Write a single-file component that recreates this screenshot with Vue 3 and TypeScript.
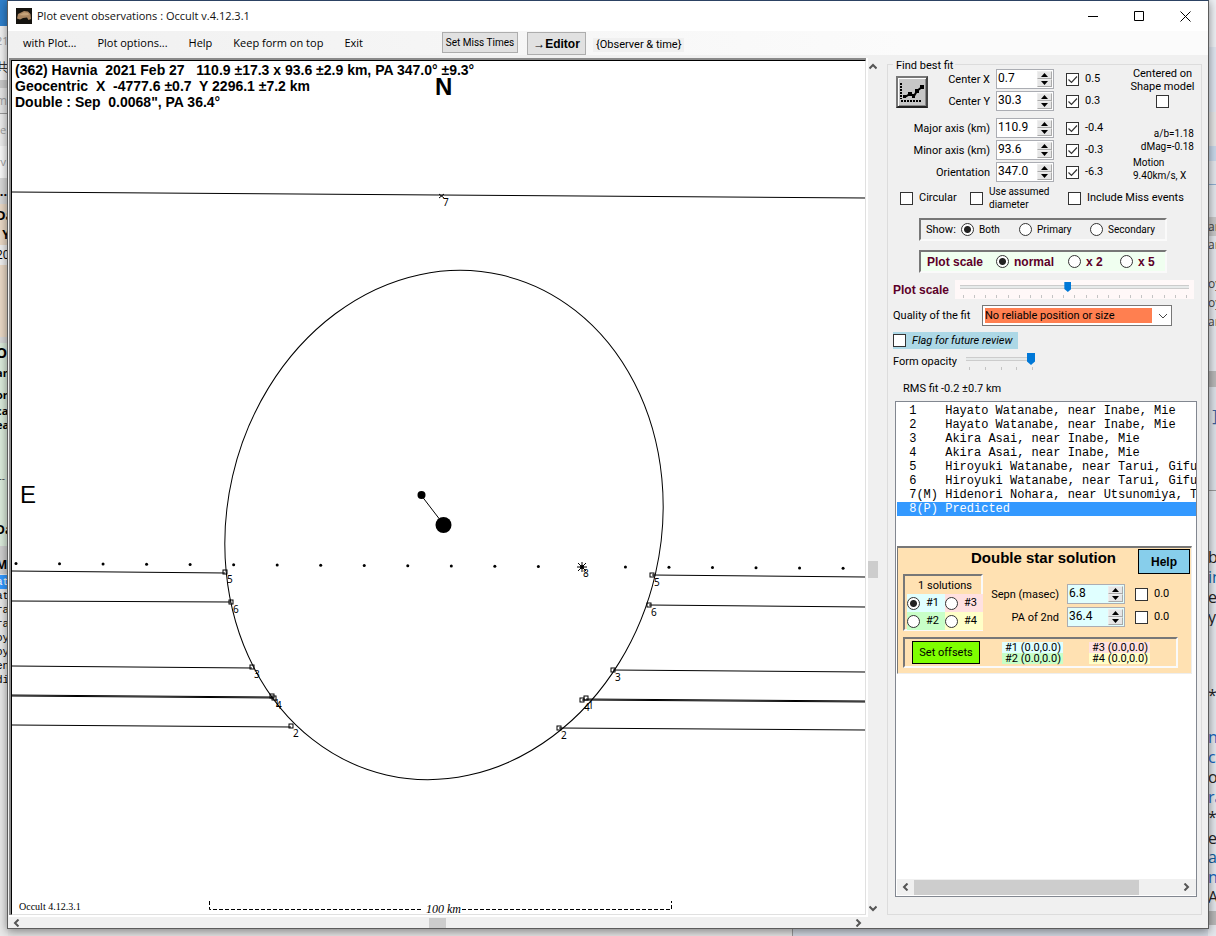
<script setup lang="ts">
import { reactive, ref } from 'vue'

interface Fragment { top: number; height: number; bg?: string; text?: string; color?: string; bold?: boolean; size?: number; mono?: boolean }
interface FitRow { id: string; label: string; value: string; on: boolean; delta: string }
interface Chord { x1: number; y1: number; x2: number; y2: number }
interface Marker { id: string; x: number; y: number }

const leftFragments: Fragment[] = [
  { top: 0, height: 26, bg: '#2f80cc' },
  { top: 26, height: 54, bg: '#f2f2f2' },
  { top: 33, height: 16, text: '21', color: '#a0a0a0', size: 11 },
  { top: 60, height: 16, text: '共', color: '#333', size: 12 },
  { top: 80, height: 8, bg: '#c9c9c9' },
  { top: 88, height: 25, bg: '#e6e6e6', text: 'm', color: '#a0a0a0', size: 12 },
  { top: 113, height: 1, bg: '#999' },
  { top: 114, height: 32, bg: '#ededed', text: 'te', color: '#a0a0a0', size: 11 },
  { top: 146, height: 32, bg: '#fafafa', text: 'rv', color: '#a0a0a0', size: 11 },
  { top: 178, height: 26, bg: '#d9d9d9', text: '...', color: '#000', bold: true, size: 13 },
  { top: 204, height: 133, bg: '#ead9c6' },
  { top: 206, height: 18, text: 'Da', color: '#000', bold: true, size: 13 },
  { top: 226, height: 18, text: '  Y', color: '#000', bold: true, size: 12 },
  { top: 245, height: 20, bg: '#f0f0f0', text: '20', color: '#000', size: 12 },
  { top: 337, height: 6, bg: '#d9d9d9' },
  { top: 343, height: 203, bg: '#dcecdc' },
  { top: 344, height: 18, text: 'Ob', color: '#000', bold: true, size: 14 },
  { top: 365, height: 16, text: 'an', color: '#000', bold: true, size: 11 },
  { top: 387, height: 16, text: 'or', color: '#000', bold: true, size: 11 },
  { top: 404, height: 13, text: 'ca', color: '#000', bold: true, size: 11 },
  { top: 417, height: 16, text: 'ea', color: '#000', bold: true, size: 11 },
  { top: 470, height: 16, text: ' --', color: '#444', size: 10 },
  { top: 522, height: 16, text: 'Da', color: '#000', bold: true, size: 12 },
  { top: 546, height: 28, bg: '#d0d0d0' },
  { top: 557, height: 16, text: 'Ma', color: '#000', bold: true, size: 12 },
  { top: 574, height: 354, bg: '#e9e9e9' },
  { top: 575, height: 14, bg: '#3399ff', text: 'at', color: '#fff', size: 11, mono: true },
  ...['at', 'ra', 'ra', 'oy', 'oy', 'en', 'di'].map((text, i) => ({ top: 589 + i * 14, height: 14, text, color: '#000', size: 11, mono: true })),
]

const rightFragments: Fragment[] = [
  { top: 0, height: 47, bg: '#eef0f4' },
  { top: 47, height: 65, bg: '#dfe6f0' },
  { top: 112, height: 34, bg: '#e6e6e6' },
  { top: 146, height: 15, bg: '#c8d8ea' },
  { top: 184, height: 1, bg: '#8faed0' },
  { top: 217, height: 19, bg: '#c8c8c8', text: 'an', color: '#444', size: 12 },
  { top: 236, height: 18, text: 'an', color: '#444', size: 12 },
  { top: 275, height: 18, text: 'oy', color: '#444', size: 12 },
  { top: 294, height: 18, text: 'oy', color: '#444', size: 12 },
  { top: 313, height: 18, text: 'an', color: '#444', size: 12 },
  { top: 371, height: 16, bg: '#b8b8b8' },
  { top: 387, height: 103, bg: '#dce1e8' },
  { top: 407, height: 18, text: ' ]', color: '#3a5f9a', size: 16 },
  { top: 490, height: 1, bg: '#999' },
  { top: 548, height: 18, text: 'b', color: '#222', size: 16 },
  { top: 568, height: 18, text: 'in', color: '#0f5c9a', size: 16 },
  { top: 588, height: 18, text: 'e', color: '#222', size: 16 },
  { top: 608, height: 18, text: 'y', color: '#222', size: 16 },
  { top: 686, height: 18, text: '*', color: '#222', size: 16 },
  { top: 728, height: 18, text: 'ne', color: '#1565c0', size: 16 },
  { top: 748, height: 18, text: 'co', color: '#1565c0', size: 16 },
  { top: 768, height: 18, text: 'on', color: '#222', size: 16 },
  { top: 788, height: 18, text: 'ra', color: '#1565c0', size: 16 },
  { top: 808, height: 18, text: '*', color: '#222', size: 16 },
  { top: 829, height: 18, text: 'e-', color: '#222', size: 16 },
  { top: 848, height: 18, text: 'an', color: '#0f5c9a', size: 16 },
  { top: 868, height: 18, text: 'n', color: '#1565c0', size: 16 },
  { top: 888, height: 18, text: 'A', color: '#222', size: 16 },
  { top: 911, height: 14, bg: '#b8b8b8' },
]

const fragmentStyle = (f: Fragment) => ({
  top: f.top + 'px', height: f.height + 'px', lineHeight: f.height + 'px',
  background: f.bg ?? 'transparent', color: f.color, fontSize: (f.size ?? 12) + 'px',
  fontWeight: f.bold ? 700 : 400, fontFamily: f.mono ? '"Liberation Mono", monospace' : undefined,
})

const menu = ['with Plot...', 'Plot options...', 'Help', 'Keep form on top', 'Exit']

const heading = [
  '(362) Havnia  2021 Feb 27   110.9 ±17.3 x 93.6 ±2.9 km, PA 347.0° ±9.3°',
  'Geocentric  X  -4777.6 ±0.7  Y 2296.1 ±7.2 km',
  'Double : Sep  0.0068", PA 36.4°',
]

const fitGroups = reactive<FitRow[][]>([
  [
    { id: 'cx', label: 'Center X', value: '0.7', on: true, delta: '0.5' },
    { id: 'cy', label: 'Center Y', value: '30.3', on: true, delta: '0.3' },
  ],
  [
    { id: 'major', label: 'Major axis (km)', value: '110.9', on: true, delta: '-0.4' },
    { id: 'minor', label: 'Minor axis (km)', value: '93.6', on: true, delta: '-0.3' },
    { id: 'orient', label: 'Orientation', value: '347.0', on: true, delta: '-6.3' },
  ],
])
const doubleRows = reactive<FitRow[]>([
  { id: 'sepn', label: 'Sepn (masec)', value: '6.8', on: false, delta: '0.0' },
  { id: 'pa', label: 'PA of 2nd', value: '36.4', on: false, delta: '0.0' },
])
const step = (row: FitRow, by: number) => { row.value = (parseFloat(row.value) + by).toFixed(1) }

const centered = ref(false)
const circular = ref(false)
const assumed = ref(false)
const misses = ref(false)
const flagged = ref(false)
const show = ref('Both')
const scale = ref('normal')
const solution = ref('#1')
const zoom = ref(47)
const opacity = ref(100)
const selected = ref(7)

const observers = [
  ' 1    Hayato Watanabe, near Inabe, Mie',
  ' 2    Hayato Watanabe, near Inabe, Mie',
  ' 3    Akira Asai, near Inabe, Mie',
  ' 4    Akira Asai, near Inabe, Mie',
  ' 5    Hiroyuki Watanabe, near Tarui, Gifu',
  ' 6    Hiroyuki Watanabe, near Tarui, Gifu',
  ' 7(M) Hidenori Nohara, near Utsunomiya, Tochigi',
  ' 8(P) Predicted',
]
const solutions = ['#1', '#3', '#2', '#4']

const chords: Chord[] = [
  { x1: 12, y1: 192, x2: 865, y2: 198 },
  { x1: 12, y1: 571, x2: 225, y2: 573 }, { x1: 652, y1: 575, x2: 865, y2: 577 },
  { x1: 12, y1: 601, x2: 231, y2: 602 }, { x1: 649, y1: 605, x2: 865, y2: 607 },
  { x1: 12, y1: 666, x2: 252, y2: 668 }, { x1: 613, y1: 670, x2: 865, y2: 672 },
  { x1: 12, y1: 695, x2: 272, y2: 697 }, { x1: 586, y1: 699, x2: 865, y2: 701 },
  { x1: 12, y1: 696, x2: 274, y2: 698 }, { x1: 582, y1: 700, x2: 865, y2: 702 },
  { x1: 12, y1: 725, x2: 291, y2: 727 }, { x1: 559, y1: 728, x2: 865, y2: 730 },
]
const markers: Marker[] = [
  { id: '5', x: 225, y: 572 }, { id: '6', x: 231, y: 602 }, { id: '3', x: 252, y: 667 },
  { id: '1', x: 272, y: 696 }, { id: '4', x: 274, y: 698 }, { id: '2', x: 291, y: 726 },
  { id: '5', x: 652, y: 575 }, { id: '6', x: 649, y: 605 }, { id: '3', x: 613, y: 670 },
  { id: '1', x: 586, y: 698 }, { id: '4', x: 582, y: 700 }, { id: '2', x: 559, y: 728 },
]
const path = Array.from({ length: 20 }, (_, i) => ({ x: 16 + i * 43.53, y: 563.5 + i * 0.25 })).filter((_, i) => i !== 13)
</script>

<template>
  <div class="desktop">
    <div class="behind left" aria-hidden="true">
      <span v-for="(f, i) in leftFragments" :key="i" :style="fragmentStyle(f)">{{ f.text }}</span>
    </div>
    <div class="behind right" aria-hidden="true">
      <span v-for="(f, i) in rightFragments" :key="i" :style="fragmentStyle(f)">{{ f.text }}</span>
    </div>

    <div class="window">
      <header class="titlebar">
        <svg class="app-icon" width="16" height="16" viewBox="0 0 16 16"><rect width="16" height="16" fill="#15130f" /><path d="M1 10.500L2 6L5 4.500L8 3L12 3.500L14.500 6L15 11L12.500 12L11 9.500L7 10L4 11.500Z" fill="#a98560" /><path d="M3 7L8 4.500L12 5L13 7L8 7.500Z" fill="#c5a279" /></svg>
        <h1>Plot event observations : Occult v.4.12.3.1</h1>
        <div class="caption">
          <button aria-label="Minimize"><svg width="11" height="11" viewBox="0 0 11 11"><path d="M0 5.500H10" /></svg></button>
          <button aria-label="Maximize"><svg width="11" height="11" viewBox="0 0 11 11"><path d="M.5 .5H9.500V9.500H.5Z" /></svg></button>
          <button aria-label="Close"><svg width="11" height="11" viewBox="0 0 11 11"><path d="M.5 .5L10.500 10.500M10.500 .5L.5 10.500" /></svg></button>
        </div>
      </header>

      <div class="menubar">
        <nav><button v-for="m in menu" :key="m">{{ m }}</button></nav>
        <button class="push miss">Set Miss Times</button>
        <button class="push editor">→Editor</button>
        <span class="mode">{Observer &amp; time}</span>
      </div>

      <main class="body">
        <section class="plot-col">
          <div class="plot">
            <svg viewBox="12 61 853 853" role="img" aria-label="Event plot">
              <g class="heading">
                <text v-for="(h, i) in heading" :key="i" x="15" :y="75 + i * 16">{{ h }}</text>
              </g>
              <text class="north" x="435" y="95">N</text>
              <text class="east" x="20" y="503">E</text>
              <g class="line">
                <line v-for="(c, i) in chords" :key="i" v-bind="c" />
                <ellipse cx="444" cy="525" rx="217" ry="256.500" transform="rotate(13 444 525)" />
                <rect v-for="(m, i) in markers" :key="i" :x="m.x - 2" :y="m.y - 2" width="4" height="4" />
                <path d="M439 194L444 198M444 194L439 198M577 567H587M582 562V572M578 563L586 571M586 563L578 571M421 495L444 525" />
              </g>
              <circle v-for="(p, i) in path" :key="i" :cx="p.x" :cy="p.y" r="1.500" />
              <circle cx="421.500" cy="495" r="4" /><circle cx="443.500" cy="525" r="8" /><circle cx="582" cy="567" r="2" />
              <g class="tag">
                <text v-for="(m, i) in markers" :key="i" :x="m.x + 2" :y="m.y + 11">{{ m.id }}</text>
                <text x="443" y="206">7</text><text x="583" y="577">8</text>
              </g>
              <path class="rule" d="M209.500 901V909.500H422M462 909.500H671.500V901" />
              <text class="km" x="426" y="913">100 km</text>
              <text class="version" x="19" y="910">Occult 4.12.3.1</text>
            </svg>
          </div>
          <div class="hbar" aria-hidden="true">
            <svg width="7" height="8" viewBox="0 0 7 8"><path d="M5.500 .5L2 4L5.500 7.500" /></svg>
            <i></i>
            <svg width="7" height="8" viewBox="0 0 7 8"><path d="M1.500 .5L5 4L1.500 7.500" /></svg>
          </div>
        </section>

        <div class="vbar" aria-hidden="true">
          <svg width="8" height="7" viewBox="0 0 8 7"><path d="M.5 5.500L4 2L7.500 5.500" /></svg>
          <span class="above"></span>
          <i></i>
          <span class="below"></span>
          <svg width="8" height="7" viewBox="0 0 8 7"><path d="M.5 1.500L4 5L7.500 1.500" /></svg>
        </div>

        <fieldset class="fit">
          <legend>Find best fit</legend>

          <div class="fit-top">
            <div class="fit-params">
              <button class="chart" aria-label="Fit">
                <svg width="26" height="26" viewBox="0 0 26 26"><path class="axis" d="M2 4V20" /><path class="axis" d="M2 22H22" /><path class="trend" d="M6 18L11 15L15 17L18 12L23 8" /><path d="M4 16H7V19H4ZM9 13H13V17H9ZM13 15H16V19H13ZM16 10H20V14H16ZM21 6H25V10H21Z" /></svg>
              </button>
              <div v-for="(g, gi) in fitGroups" :key="gi" class="fit-group">
                <div v-for="r in g" :key="r.id" class="fit-row">
                  <label :for="r.id">{{ r.label }}</label>
                  <span class="spin">
                    <input :id="r.id" v-model="r.value" type="text">
                    <span><button aria-label="Up" @click="step(r, 0.1)"><svg width="7" height="4" viewBox="0 0 7 4"><path d="M0 4L3.500 0L7 4Z" /></svg></button><button aria-label="Down" @click="step(r, -0.1)"><svg width="7" height="4" viewBox="0 0 7 4"><path d="M0 0L3.500 4L7 0Z" /></svg></button></span>
                  </span>
                  <label class="tick"><input v-model="r.on" type="checkbox">{{ r.delta }}</label>
                </div>
              </div>
            </div>
            <div class="fit-side">
              <label class="centered">Centered on<br>Shape model<input v-model="centered" type="checkbox"></label>
              <p class="ratio">a/b=1.18<br>dMag=-0.18</p>
              <p class="motion">Motion<br>9.40km/s, X</p>
            </div>
          </div>

          <div class="options">
            <label class="tick"><input v-model="circular" type="checkbox">Circular</label>
            <label class="tick small"><input v-model="assumed" type="checkbox"><span>Use assumed<br>diameter</span></label>
            <label class="tick"><input v-model="misses" type="checkbox">Include Miss events</label>
          </div>

          <div class="sunken show">
            <span>Show:</span>
            <label v-for="s in ['Both', 'Primary', 'Secondary']" :key="s"><input v-model="show" type="radio" name="show" :value="s">{{ s }}</label>
          </div>
          <div class="sunken scale">
            <span>Plot scale</span>
            <label v-for="s in ['normal', 'x 2', 'x 5']" :key="s"><input v-model="scale" type="radio" name="scale" :value="s">{{ s }}</label>
          </div>

          <div class="slide-row">
            <label class="maroon" for="zoom">Plot scale</label>
            <div class="slider wide"><input id="zoom" v-model="zoom" type="range"><div class="ticks"><i v-for="n in 21" :key="n"></i></div></div>
          </div>

          <div class="quality">
            <label for="quality">Quality of the fit</label>
            <div class="combo">
              <select id="quality"><option>No reliable position or size</option></select>
              <svg width="10" height="6" viewBox="0 0 10 6"><path d="M1 1L5 5L9 1" /></svg>
            </div>
          </div>

          <label class="tick flag"><input v-model="flagged" type="checkbox">Flag for future review</label>

          <div class="slide-row opacity">
            <label for="opacity">Form opacity</label>
            <div class="slider"><input id="opacity" v-model="opacity" type="range"><div class="ticks"><i v-for="n in 5" :key="n"></i></div></div>
          </div>

          <p class="rms">RMS fit -0.2 ±0.7 km</p>

          <div class="listbox">
            <ul>
              <li v-for="(o, i) in observers" :key="i" :class="{ on: selected === i }" @click="selected = i">{{ o }}</li>
            </ul>
            <section class="double">
              <h2>Double star solution</h2>
              <button class="help">Help</button>
              <div class="double-mid">
                <div class="sunken solutions">
                  <p>1 solutions</p>
                  <label v-for="(s, i) in solutions" :key="s" :class="'c' + i"><input v-model="solution" type="radio" name="solution" :value="s">{{ s }}</label>
                </div>
                <div class="double-rows">
                  <div v-for="r in doubleRows" :key="r.id" class="fit-row">
                    <label :for="r.id">{{ r.label }}</label>
                    <span class="spin cyan">
                      <input :id="r.id" v-model="r.value" type="text">
                      <span><button aria-label="Up" @click="step(r, 0.1)"><svg width="7" height="4" viewBox="0 0 7 4"><path d="M0 4L3.500 0L7 4Z" /></svg></button><button aria-label="Down" @click="step(r, -0.1)"><svg width="7" height="4" viewBox="0 0 7 4"><path d="M0 0L3.500 4L7 0Z" /></svg></button></span>
                    </span>
                    <label class="tick"><input v-model="r.on" type="checkbox">{{ r.delta }}</label>
                  </div>
                </div>
              </div>
              <div class="sunken offsets">
                <button>Set offsets</button>
                <p><span class="c0">#1 (0.0,0.0)</span><span class="c2">#2 (0.0,0.0)</span></p>
                <p><span class="c1">#3 (0.0,0.0)</span><span class="c3">#4 (0.0,0.0)</span></p>
              </div>
            </section>
            <div class="list-scroll" aria-hidden="true">
              <svg width="7" height="8" viewBox="0 0 7 8"><path d="M5.500 .5L2 4L5.500 7.500" /></svg>
              <i></i>
              <svg width="7" height="8" viewBox="0 0 7 8"><path d="M1.500 .5L5 4L1.500 7.500" /></svg>
            </div>
          </div>
        </fieldset>
      </main>
    </div>
  </div>
</template>

<style>
html, body { margin: 0; background: #e4e4e4; }
</style>

<style scoped>
* { box-sizing: border-box; }
p, h1, h2, ul { margin: 0; padding: 0; font-weight: 400; }
button, input, select { font: inherit; color: inherit; margin: 0; padding: 0; border: 0; background: none; border-radius: 0; }
.desktop { position: relative; display: flex; height: 100vh; min-height: 900px; padding: 0 7px 7px; overflow: hidden; background: linear-gradient(90deg, #e4e4e4 792px, #999 792px, #999 793px, #d3d9e2 793px); font: 11px/14px Roboto, "Liberation Sans", "Noto Sans CJK JP", sans-serif; color: #000; }
.behind { position: absolute; top: 0; bottom: 0; width: 8px; overflow: hidden; font-family: "Open Sans", "Noto Sans CJK JP", sans-serif; background: #e9e9e9; }
.behind.left { left: 0; }
.behind.right { right: 0; background: #e4e7ec; }
.behind span { position: absolute; left: 0; width: 8px; overflow: hidden; white-space: pre; }
.behind.left span { text-indent: -4px; }
.window { position: relative; flex: 1; min-width: 0; display: flex; flex-direction: column; background: #f0f0f0; border: 1px solid #5c5c5c; border-top-color: #2c4263; box-shadow: 0 2px 9px rgba(0, 0, 0, .45); }

.titlebar { display: flex; align-items: center; height: 30px; padding-left: 8px; background: #fff; }
.app-icon { margin-right: 5px; }
.titlebar h1 { flex: 1; font: 11px/16px "Open Sans", sans-serif; color: #111; }
.caption { display: flex; }
.caption button { width: 46px; height: 28px; display: flex; align-items: center; justify-content: center; }
.caption svg { fill: none; stroke: #000; stroke-width: 1; }

.menubar { display: flex; align-items: flex-start; height: 24px; background: linear-gradient(90deg, #f0f0f0, #fbfbfb 75%); padding-top: 1px; }
.menubar nav { display: flex; gap: 21px; width: 434px; padding-left: 15px; }
.menubar nav button { font: 11px/22px "Open Sans", sans-serif; white-space: nowrap; }
.push { border: 1px solid #adadad; background: #e1e1e1; white-space: nowrap; }
.miss { width: 76px; height: 21px; font-size: 10px; }
.editor { width: 59px; height: 23px; margin-left: 9px; font: bold 12px "Liberation Sans", sans-serif; }
.mode { margin: 6px 0 0 7px; padding: 0 3px; background: #f0f0f0; }

.body { flex: 1; min-height: 0; display: flex; padding: 3px 6px 0 1px; }
.plot-col { flex: 1; min-width: 0; display: flex; flex-direction: column; padding-right: 2px; background: #fff; }
.plot { flex: 1; min-height: 0; border: 2px solid #8a8a8a; border-width: 2px 0 0 2px; background: #fff; }
.plot svg { display: block; width: 100%; height: 100%; border: 1px solid #000; border-right-color: #e0e0e0; border-bottom-color: #e0e0e0; }
.heading { font: bold 14px "Liberation Sans", sans-serif; }
.heading text { white-space: pre; }
.north { font: bold 24px "Liberation Sans", sans-serif; }
.east { font: 24px "Liberation Sans", sans-serif; }
.tag { font: 10px "Noto Sans", sans-serif; }
.line { fill: none; stroke: #000; stroke-width: 1; }
.rule { fill: none; stroke: #000; stroke-dasharray: 4 2; }
.km { font: italic 12px "Liberation Serif", serif; }
.version { font: 10px "Liberation Serif", serif; }

.hbar, .list-scroll { display: flex; align-items: center; background: #f0f0f0; }
.hbar { height: 11px; margin: 2px -2px 0 0; padding: 0 6px 0 4px; justify-content: space-between; }
.hbar i { width: 17px; height: 10px; background: #cdcdcd; }
.hbar svg, .vbar svg, .list-scroll svg { fill: none; stroke: #555; stroke-width: 2; }
.vbar { width: 12px; display: flex; flex-direction: column; padding: 5px 2px 16px 0; }
.vbar svg { margin-left: 1px; flex: none; }
.vbar .above { flex: 3; }
.vbar .below { flex: 2; }
.vbar i { flex: none; height: 17px; background: #cdcdcd; }

.fit { width: 315px; min-width: 0; margin: 1px 0 13px 7px; padding: 0 4px 17px 5px; border: 1px solid #dcdcdc; display: flex; flex-direction: column; }
.fit legend { height: 10px; padding: 0 2px 0 3px; line-height: 14px; white-space: nowrap; }
.fit-top { display: flex; gap: 16px; }
.fit-params { position: relative; display: flex; flex-direction: column; gap: 7px; }
.fit-group { display: flex; flex-direction: column; gap: 2px; }
.chart { position: absolute; left: 3px; top: 7px; width: 32px; height: 32px; display: flex; align-items: center; justify-content: center; background: #c6c6c6; border: 2px solid; border-color: #777 #444 #222 #777; box-shadow: inset 1px 1px #fff, inset -1px -1px #888; }
.chart .axis { fill: none; stroke: #000; stroke-width: 2; stroke-dasharray: 2 1; }
.chart .trend { fill: none; stroke: #000; stroke-width: 2; }
.fit-row { display: grid; grid-template-columns: 97px 58px 54px; align-items: center; height: 20px; }
.fit-params .fit-row { column-gap: 6px; }
.fit-row > label:first-child { text-align: right; white-space: nowrap; padding-top: 2px; }
.spin { display: flex; height: 20px; border: 1px solid #abadb3; background: #fff; padding: 1px; }
.spin.cyan { background: #e0ffff; }
.spin input { flex: 1; width: 20px; min-width: 0; outline: 0; font-size: 12px; line-height: 14px; padding-bottom: 2px; }
.spin > span { width: 15px; display: flex; flex-direction: column; background: #e6e6e6; }
.spin button { flex: 1; display: flex; align-items: center; justify-content: center; border: 1px solid #aaa; border-top-color: #eee; border-left-color: #eee; }
.tick { display: flex; align-items: center; gap: 6px; white-space: nowrap; }
.fit-params .tick { padding-left: 6px; }
input[type=checkbox] { appearance: none; flex: none; width: 13px; height: 13px; border: 1px solid #333; background: #fff; }
input[type=checkbox]:checked { background: #fff url("data:image/svg+xml,%3Csvg xmlns='http://www.w3.org/2000/svg' viewBox='0 0 11 11'%3E%3Cpath d='M1.500 5.500L4.500 8.500L10 2.500' fill='none' stroke='%23333' stroke-width='1.200'/%3E%3C/svg%3E"); }
input[type=radio] { appearance: none; flex: none; width: 13px; height: 13px; border: 1px solid #333; border-radius: 50%; background: #fff; }
input[type=radio]:checked { background: radial-gradient(circle, #222 3px, #fff 4px); }
.fit-side { flex: 1; font-size: 10px; line-height: 13px; }
.centered { display: block; margin: -2px 2px 19px 0; text-align: center; font-size: 11px; white-space: nowrap; }
.centered input { display: block; margin: 2px auto 0; }
.ratio { text-align: right; padding-right: 3px; margin-bottom: 3px; }
.motion { padding-left: 3px; white-space: nowrap; }

.options { display: flex; align-items: center; height: 26px; margin-top: 3px; padding-left: 7px; }
.options .tick:nth-child(1) { width: 70px; }
.options .tick:nth-child(2) { width: 98px; }
.small { font-size: 10px; line-height: 13px; }
.sunken { border: 2px solid; border-color: #777 #fafafa #fafafa #777; }
.show, .scale { width: 248px; margin: 7px 0 0 26px; height: 23px; display: flex; align-items: center; }
.show { padding-left: 5px; font-size: 10px; }
.show span { font-size: 11px; width: 35px; }
.show label, .scale label { display: flex; align-items: center; gap: 5px; white-space: nowrap; }
.show label:nth-of-type(1) { width: 58px; }
.show label:nth-of-type(2) { width: 71px; }
.scale { margin-top: 9px; padding-left: 6px; background: #f0fff0; }
.scale, .maroon { font: bold 12px "Liberation Sans", sans-serif; color: #5c0029; }
.scale span { width: 69px; }
.scale label:nth-of-type(1) { width: 72px; }
.scale label:nth-of-type(2) { width: 52px; }

.slide-row { display: flex; align-items: center; height: 19px; margin-top: 7px; }
.slide-row > label { width: 73px; }
.slide-row > .maroon { width: 62px; }
.slider { width: 69px; }
.slider.wide { flex: 1; margin-right: 3px; padding: 1px 5px 0; background: #fff8f8; height: 19px; }
.slider input { display: block; appearance: none; width: 100%; height: 12px; background: linear-gradient(#ccc, #ccc) 0 4px / 100% 1px no-repeat, linear-gradient(#ccc, #ccc) 0 7px / 100% 1px no-repeat, linear-gradient(#e7eaea, #e7eaea) 0 5px / 100% 2px no-repeat; }
.slider input::-webkit-slider-thumb { appearance: none; width: 7px; height: 10px; background: #0078d7; clip-path: polygon(0 0, 100% 0, 100% 70%, 50% 100%, 0 70%); }
.opacity .slider input::-webkit-slider-thumb { width: 8px; height: 12px; }
.ticks { display: flex; justify-content: space-between; margin: 2px 2px 0 3px; }
.ticks i { width: 1px; height: 3px; background: #c4c4c4; }
.slide-row.opacity { margin-top: 3px; }

.quality { display: flex; align-items: center; margin-top: 6px; }
.quality > label { width: 89px; }
.combo { display: flex; align-items: center; width: 190px; height: 21px; border: 1px solid #777; background: #fff; padding: 2px; }
.combo select { appearance: none; width: 167px; height: 15px; background: #ff7f50; outline: 0; line-height: 15px; }
.combo svg { margin-left: 6px; fill: none; stroke: #444; }
.flag { align-self: flex-start; width: 125px; height: 17px; margin-top: 6px; background: #add8e6; font-style: italic; }
.rms { margin: 10px 0 4px 10px; line-height: 16px; }

.listbox { flex: 1; min-height: 0; display: flex; flex-direction: column; margin-left: 2px; border: 1px solid #828790; background: #fff; padding: 1px 0 1px 1px; }
.listbox ul { list-style: none; overflow: hidden; padding-top: 1px; height: 143px; flex: none; }
.listbox li { font: 12px/14px "Liberation Mono", monospace; white-space: pre; padding-left: 5px; }
.listbox li.on { background: #3399ff; color: #fff; }
.double { position: relative; height: 128px; flex: none; margin-right: 4px; border: 1px solid #777; border-top-width: 2px; border-right-color: #eee; border-bottom-color: #eee; background: #ffe1b2; padding: 0 13px 0 5px; }
.double h2 { font: bold 15px/20px "Liberation Sans", sans-serif; padding-left: 68px; white-space: nowrap; }
.help { position: absolute; right: 1px; top: 1px; width: 52px; height: 25px; border: 1px solid #000; background: #87ceeb; font: bold 12px "Liberation Sans", sans-serif; }
.double-mid { display: flex; margin-top: 6px; }
.solutions { width: 80px; height: 57px; padding: 3px 0 0 2px; display: grid; grid-template-columns: 38px 38px; grid-template-rows: 15px 18px 18px; }
.solutions p { grid-column: 1 / 3; text-align: center; }
.solutions label { display: flex; align-items: center; gap: 6px; }
.c0 { background: #e0ffff; }
.c1 { background: #ffe1e1; }
.c2 { background: #c8ffc8; }
.c3 { background: #ffffc8; }
.double-rows { display: flex; flex-direction: column; gap: 3px; padding-top: 10px; }
.double-rows .fit-row { grid-template-columns: 76px 58px 46px; column-gap: 8px; }
.double-rows .tick { padding-left: 2px; }
.offsets { display: flex; align-items: center; height: 31px; margin-top: 6px; padding-left: 7px; }
.offsets button { width: 68px; height: 23px; margin-right: 22px; border: 1px solid #000; background: #7fff00; }
.offsets p { display: flex; flex-direction: column; width: 61px; margin-right: 26px; line-height: 11px; }
.offsets span { padding-left: 3px; white-space: nowrap; }
.list-scroll { margin-top: auto; height: 16px; padding: 0 6px 0 5px; }
.list-scroll i { flex: none; width: 225px; height: 15px; margin: 0 auto 0 5px; background: #cdcdcd; }
</style>
